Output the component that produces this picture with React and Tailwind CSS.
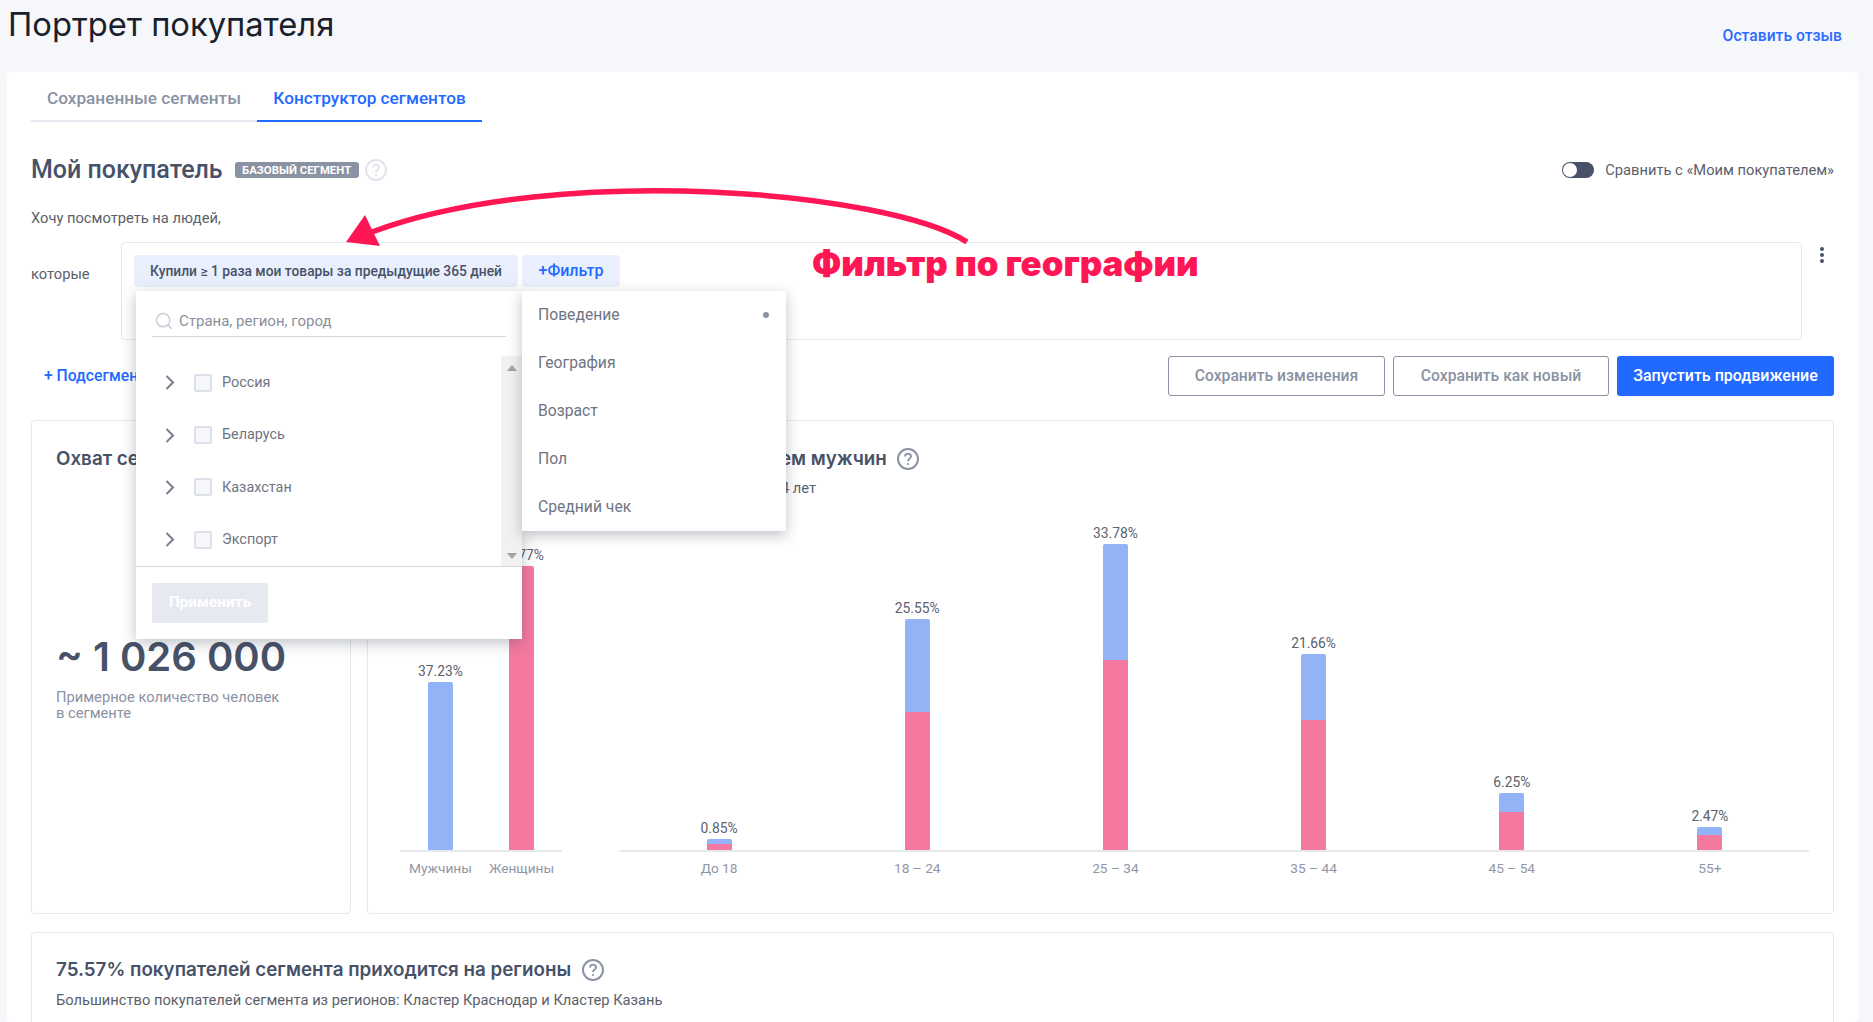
import { Search } from "lucide-react";

const countries = ["Россия", "Беларусь", "Казахстан", "Экспорт"];
const filters = ["Поведение", "География", "Возраст", "Пол", "Средний чек"];

// высоты столбиков в пикселях: total - весь столбик, pink - нижняя часть
const genderBars = [
  { label: "Мужчины", pct: "37.23%", total: 168, pink: 0 },
  { label: "Женщины", pct: "62.77%", total: 284, pink: 284 },
];
const ageBars = [
  { label: "До 18", pct: "0.85%", total: 11, pink: 6 },
  { label: "18 – 24", pct: "25.55%", total: 231, pink: 138 },
  { label: "25 – 34", pct: "33.78%", total: 306, pink: 190 },
  { label: "35 – 44", pct: "21.66%", total: 196, pink: 130 },
  { label: "45 – 54", pct: "6.25%", total: 57, pink: 38 },
  { label: "55+", pct: "2.47%", total: 23, pink: 15 },
];

const HelpIcon = ({ className }) => (
  <svg viewBox="0 0 22 22" className={`w-[22px] h-[22px] shrink-0 ${className}`} fill="none" stroke="currentColor">
    <circle cx="11" cy="11" r="10" strokeWidth="2" />
    <path d="M8 8.6c0-1.8 1.3-2.9 3-2.9s3 1.1 3 2.7c0 2.4-3 2.4-3 4.8" strokeWidth="1.8" />
    <circle cx="11" cy="16" r="1.1" fill="currentColor" stroke="none" />
  </svg>
);

const BarColumn = ({ bar }) => (
  <div className="flex flex-col items-center justify-end">
    <span className="text-[13.8px] leading-4 mb-[3px] text-[#5b606b]">{bar.pct}</span>
    <div className="w-[25px] rounded-t-[2px] overflow-hidden flex flex-col justify-end bg-[#93b3f7]" style={{ height: bar.total }}>
      <div className="bg-[#f5799f]" style={{ height: bar.pink }} />
    </div>
  </div>
);

const BarGroup = ({ bars, className }) => (
  <div className={`flex flex-col ${className}`}>
    <div className="flex-1 grid items-end border-b-2 border-[#e6e8ef] grid-flow-col auto-cols-fr">
      {bars.map((bar) => (
        <BarColumn key={bar.label} bar={bar} />
      ))}
    </div>
    <div className="h-[61px] pt-[8px] grid grid-flow-col auto-cols-fr">
      {bars.map((bar) => (
        <span key={bar.label} className="text-center text-[13.7px] leading-4 text-[#8f96a6]">{bar.label}</span>
      ))}
    </div>
  </div>
);

const GeoDropdown = () => (
  <div className="absolute left-[14px] top-[48px] z-20 flex items-start">
    <div className="w-[386px] h-[348px] bg-white shadow-[0_4px_14px_rgba(40,50,70,0.3)] flex flex-col">
      <div className="mx-4 mt-4 h-[31px] flex items-center gap-[5px] border-b border-[#d5d8e0] pl-[2px] pb-[1px]">
        <Search size={20} strokeWidth={1.8} className="text-[#c9ced9]" />
        <span className="text-[15px] text-[#8a8f9c]">Страна, регион, город</span>
      </div>
      <div className="mt-[19px] flex-1 flex border-b border-[#d5d8e0]">
        <div className="flex-1 pl-[29px]">
          {countries.map((name) => (
            <div key={name} className="h-[52.4px] flex items-center">
              <svg viewBox="0 0 10 15" className="w-[10px] h-[15px] text-[#767d8d] mr-[19px]" fill="none" stroke="currentColor" strokeWidth="2">
                <path d="M1.5 1 L8 7.5 L1.5 14" />
              </svg>
              <span className="w-[18px] h-[18px] rounded-[2px] border-2 border-[#dde0e8] bg-[#f5f7fb] mr-[10px]" />
              <span className="text-[14.4px] text-[#6f7482]">{name}</span>
            </div>
          ))}
        </div>
        <div className="w-[21px] bg-[#f1f1f1] flex flex-col items-center justify-between pt-[9px] pb-[7px]">
          <span className="w-0 h-0 border-x-[5px] border-x-transparent border-b-[6px] border-b-[#a3a3a3]" />
          <span className="w-0 h-0 border-x-[5px] border-x-transparent border-t-[6px] border-t-[#a3a3a3]" />
        </div>
      </div>
      <div className="h-[73px] pl-4 pt-4">
        <div className="w-[116px] h-10 rounded-[2px] bg-[#e6e9f0] flex items-center justify-center text-[15.5px] font-bold text-white">
          Применить
        </div>
      </div>
    </div>
    <div className="w-[264px] h-[240px] bg-white rounded-r-[2px] shadow-[0_4px_14px_rgba(40,50,70,0.3)] pl-4 pr-4">
      {filters.map((name, i) => (
        <div key={name} className="h-[48px] flex items-center justify-between text-[15.7px] text-[#6f7482]">
          {name}
          {i === 0 && <span className="w-[6px] h-[6px] rounded-full bg-[#8a92a3] mr-[1px]" />}
        </div>
      ))}
    </div>
  </div>
);

const Annotation = () => (
  <>
    <svg className="absolute left-0 top-0 z-30 pointer-events-none" width="1000" height="260" fill="none">
      <path d="M967 242 C 890 192, 560 162, 372 232" stroke="#ff1654" strokeWidth="5.5" />
      <polygon points="365,215 346,242 380,246" fill="#ff1654" />
    </svg>
    <div className="absolute left-[812px] top-[243px] z-30 text-[34.8px] leading-[40px] font-black text-[#ff1654]" style={{ fontFamily: "Inter, sans-serif" }}>
      Фильтр по географии
    </div>
  </>
);

export default function App() {
  return (
    <div className="relative h-[1022px] overflow-hidden bg-[#f5f7fb] text-[#5b606b]" style={{ fontFamily: "Roboto, sans-serif" }}>
      <Annotation />

      <header className="h-[72px] flex justify-between pl-2 pr-[31px]">
        <h1 className="mt-[4px] text-[32.7px] leading-[40px] text-[#1a202c]" style={{ fontFamily: "Inter, sans-serif" }}>Портрет покупателя</h1>
        <a className="mt-[26px] text-[15.7px] leading-5 font-medium text-[#2b6bff]">Оставить отзыв</a>
      </header>

      <main className="ml-[7px] mr-[15px] h-[950px] bg-white rounded-[4px] px-6">
        <div className="flex h-[50px]">
          <div className="w-[226px] pt-[6px] flex items-center justify-center border-b-2 border-[#e6e8ef] text-[17.2px] font-medium text-[#8a92a3]">Сохраненные сегменты</div>
          <div className="w-[225px] pt-[6px] flex items-center justify-center border-b-2 border-[#2269ff] text-[17.2px] font-medium text-[#2269ff]">Конструктор сегментов</div>
        </div>

        <div className="mt-[36px] h-6 flex items-center">
          <h2 className="text-[25px] font-medium text-[#475269]">Мой покупатель</h2>
          <span className="ml-[12px] h-4 w-[124px] text-center rounded-[3px] bg-[#8a92a3] text-[11.4px] leading-4 font-bold text-white">БАЗОВЫЙ СЕГМЕНТ</span>
          <HelpIcon className="ml-[6px] text-[#e0e3ea]" />
          <div className="ml-auto flex items-center gap-[11px]">
            <span className="w-8 h-4 rounded-full bg-[#475269] flex items-center pl-[1px]">
              <span className="w-[14px] h-[14px] rounded-full bg-white" />
            </span>
            <span className="text-[14.7px]">Сравнить с «Моим покупателем»</span>
          </div>
        </div>

        <p className="mt-[26px] text-[14.7px] leading-5">Хочу посмотреть на людей,</p>

        <div className="mt-[14px] flex items-start">
          <span className="w-[90px] pt-[22px] text-[14.7px] leading-5">которые</span>
          <div className="relative flex-1 h-[98px] rounded-[4px] border border-[#e6e8ef] px-3 pt-3 flex gap-[4px] items-start">
            <span className="h-8 w-[384px] justify-center rounded-[4px] bg-[#e9effc] flex items-center text-[13.8px] font-medium text-[#475269]">Купили ≥ 1 раза мои товары за предыдущие 365 дней</span>
            <span className="h-8 w-[98px] justify-center rounded-[4px] bg-[#e9effc] flex items-center text-[16px] font-medium text-[#2269ff]">+Фильтр</span>
            <GeoDropdown />
          </div>
          <div className="w-8 pt-[5px] flex flex-col items-end gap-[2px] pr-[10px]">
            <span className="w-[4px] h-[4px] rounded-full bg-[#475269]" />
            <span className="w-[4px] h-[4px] rounded-full bg-[#475269]" />
            <span className="w-[4px] h-[4px] rounded-full bg-[#475269]" />
          </div>
        </div>

        <div className="mt-[16px] h-10 flex items-center">
          <span className="pl-[13px] text-[15.7px] font-medium text-[#2269ff]">+ Подсегмент</span>
          <div className="ml-auto flex gap-2">
            <span className="w-[217px] h-10 rounded-[3px] border border-[#8a92a3] flex items-center justify-center text-[15.7px] font-medium text-[#8a92a3]">Сохранить изменения</span>
            <span className="w-[216px] h-10 rounded-[3px] border border-[#8a92a3] flex items-center justify-center text-[15.7px] font-medium text-[#8a92a3]">Сохранить как новый</span>
            <span className="w-[217px] h-10 rounded-[3px] bg-[#2269ff] flex items-center justify-center text-[16px] font-medium text-white">Запустить продвижение</span>
          </div>
        </div>

        <div className="mt-[24px] flex gap-[16px]">
          <section className="w-[320px] h-[494px] rounded-[4px] border border-[#e6e8ef] px-6 pt-[26px]">
            <h3 className="text-[18.8px] leading-6 font-semibold text-[#475269]" style={{ fontFamily: "Inter, sans-serif" }}>Охват сегмента</h3>
            <div className="mt-[162px] text-[40px] leading-[48px] font-semibold text-[#475269]" style={{ fontFamily: "Inter, sans-serif" }}>~ 1 026 000</div>
            <p className="mt-[8px] text-[14.7px] leading-4 text-[#8a92a3]">Примерное количество человек<br />в сегменте</p>
          </section>

          <section className="flex-1 h-[494px] rounded-[4px] border border-[#e6e8ef] flex flex-col">
            <div className="pl-[42px] pt-[26px] flex items-center gap-[10px] h-[50px]">
              <h3 className="text-[18.8px] leading-6 font-semibold text-[#475269] whitespace-nowrap" style={{ fontFamily: "Inter, sans-serif" }}>В сегменте женщин намного больше, чем мужчин</h3>
              <HelpIcon className="text-[#8a92a3]" />
            </div>
            <p className="pl-[37px] mt-[7px] text-[14.7px] leading-5">Большинство покупателей сегмента в возрасте 25 – 34 лет</p>
            <div className="flex-1 flex pl-8 pr-6 gap-[58px]">
              <BarGroup bars={genderBars} className="w-[162px]" />
              <BarGroup bars={ageBars} className="flex-1" />
            </div>
          </section>
        </div>

        <section className="mt-[18px] h-[200px] rounded-[4px] border border-[#e6e8ef] px-6 pt-[25px]">
          <div className="flex items-center gap-[11px]">
            <h3 className="text-[18.8px] leading-6 font-semibold text-[#475269]" style={{ fontFamily: "Inter, sans-serif" }}>75.57% покупателей сегмента приходится на регионы</h3>
            <HelpIcon className="text-[#8a92a3]" />
          </div>
          <p className="mt-[8px] text-[14.7px] leading-5">Большинство покупателей сегмента из регионов: Кластер Краснодар и Кластер Казань</p>
        </section>
      </main>
    </div>
  );
}
